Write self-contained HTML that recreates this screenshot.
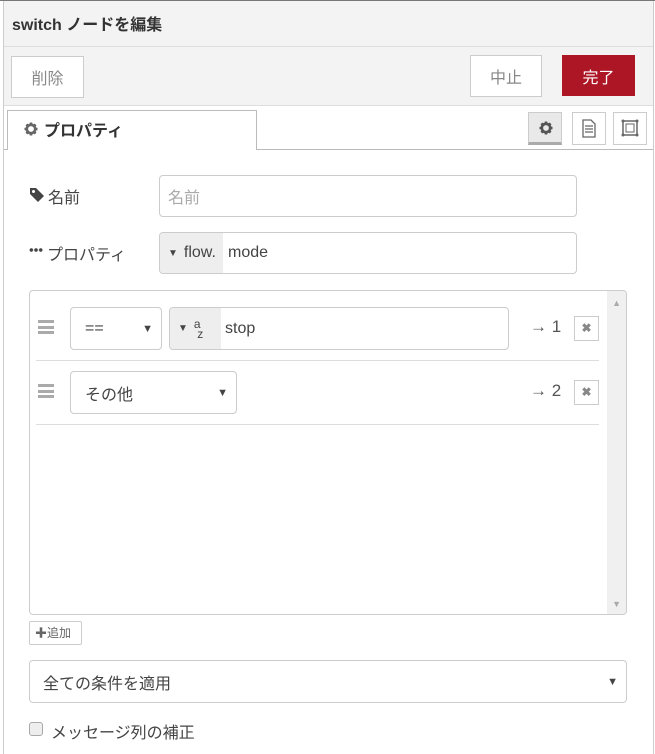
<!DOCTYPE html><html><head><meta charset="utf-8"><style>
*{box-sizing:border-box;margin:0;padding:0}
body{width:655px;height:754px;overflow:hidden;background:#fff;font-family:"Liberation Sans","Noto Sans CJK JP",sans-serif;color:#555;position:relative}
.a{position:absolute}
.btn{position:absolute;background:#fff;border:1px solid #ccc;font-size:16px;color:#888;display:flex;align-items:center;justify-content:center}
.in{position:absolute;border:1px solid #ccc;border-radius:4px;background:#fff;font-size:16px;display:flex;align-items:center}
</style></head><body>
<svg width="0" height="0" style="position:absolute"><defs><g id="gear"><circle cx="7" cy="7" r="4.2" fill="none" stroke="currentColor" stroke-width="2.6"/><path d="M7 0.5v3M7 10.5v3M0.5 7h3M10.5 7h3M2.4 2.4l2.1 2.1M9.5 9.5l2.1 2.1M2.4 11.6l2.1-2.1M9.5 4.5l2.1-2.1" stroke="currentColor" stroke-width="2.6"/></g></defs></svg>
<div class="a" style="left:0;top:0;width:655px;height:1px;background:#777"></div>
<div class="a" style="left:3px;top:1px;width:651px;height:104px;background:#f3f3f3;border-left:1px solid #ccc;border-right:1px solid #ccc"></div>
<div class="a" style="left:3px;top:105px;width:1px;height:649px;background:#ccc"></div>
<div class="a" style="left:653px;top:105px;width:1px;height:649px;background:#ccc"></div>
<div class="a" style="left:12px;top:11px;font-size:16px;font-weight:bold;color:#333">switch ノードを編集</div>
<div class="a" style="left:4px;top:46px;width:649px;height:1px;background:#ddd"></div>
<div class="btn" style="left:11px;top:56px;width:73px;height:42px">削除</div>
<div class="btn" style="left:470px;top:55px;width:72px;height:42px">中止</div>
<div class="btn" style="left:562px;top:55px;width:73px;height:41px;background:#ad1625;border-color:#ad1625;color:#fff">完了</div>
<div class="a" style="left:4px;top:105px;width:649px;height:1px;background:#ddd"></div>
<div class="a" style="left:4px;top:149px;width:649px;height:1px;background:#bbb"></div>
<div class="a" style="left:7px;top:110px;width:250px;height:40px;background:#fff;border:1px solid #bbb;border-bottom:none"></div>
<svg class="a" style="left:24px;top:122px;color:#666" width="14" height="14"><use href="#gear"/></svg>
<div class="a" style="left:44px;top:117px;font-size:16px;font-weight:bold;color:#333">プロパティ</div>
<div class="a" style="left:528px;top:112px;width:34px;height:33px;background:#e9e9e9;border:1px solid #ccc;border-bottom:3px solid #aaa"><svg style="position:absolute;left:10px;top:8px;color:#555" width="14" height="14"><use href="#gear"/></svg></div>
<div class="a" style="left:572px;top:112px;width:34px;height:33px;border:1px solid #ccc;background:#fff"><svg width="32" height="31"><path d="M10 7h8l4 4v13H10z M12 13h8 M12 16h8 M12 19h8" fill="none" stroke="#666" stroke-width="1.3"/></svg></div>
<div class="a" style="left:613px;top:112px;width:34px;height:33px;border:1px solid #ccc;background:#fff"><svg width="32" height="31"><rect x="9" y="8" width="14" height="14" fill="none" stroke="#666" stroke-width="1.5"/><rect x="12" y="11" width="8" height="8" fill="none" stroke="#666"/><circle cx="9" cy="8" r="1.5" fill="#666"/><circle cx="23" cy="8" r="1.5" fill="#666"/><circle cx="9" cy="22" r="1.5" fill="#666"/><circle cx="23" cy="22" r="1.5" fill="#666"/></svg></div>
<svg class="a" style="left:29px;top:187px" width="16" height="16"><path d="M1 1h6l8 8-6 6-8-8z" fill="#444"/><circle cx="4.5" cy="4.5" r="1.5" fill="#fff"/></svg>
<div class="a" style="left:48px;top:184px;font-size:16px;color:#444">名前</div>
<div class="in" style="left:159px;top:175px;width:418px;height:42px;padding-left:8px;color:#aaa">名前</div>
<div class="a" style="left:29px;top:248px;width:14px;height:4px;background:radial-gradient(circle,#444 1.6px,transparent 2px) 0 0/4.7px 4px repeat-x"></div>
<div class="a" style="left:47px;top:241px;font-size:16px;color:#444">プロパティ</div>
<div class="in" style="left:159px;top:232px;width:418px;height:42px;overflow:hidden"><div style="width:63px;height:100%;background:#eee;display:flex;align-items:center;padding-left:8px;color:#444"><span style="font-size:10px;margin-right:6px">▼</span>flow.</div><span style="margin-left:5px;color:#444">mode</span></div>
<div class="a" style="left:29px;top:290px;width:598px;height:325px;border:1px solid #ccc;border-radius:4px;overflow:hidden">
<div class="a" style="right:0;top:0;width:19px;height:100%;background:#f0f0f0"></div>
<div class="a" style="right:5px;top:7px;font-size:9px;color:#aaa">▲</div>
<div class="a" style="right:5px;bottom:5px;font-size:9px;color:#aaa">▼</div>
</div>
<div class="a" style="left:38px;top:320px;width:16px;height:14px;border-top:3px solid #aaa;border-bottom:3px solid #aaa"><div style="margin-top:2.5px;height:3px;background:#aaa"></div></div>
<div class="in" style="left:70px;top:307px;width:92px;height:43px;padding-left:14px;color:#444">==<span style="position:absolute;right:8px;font-size:11px">▼</span></div>
<div class="in" style="left:169px;top:307px;width:340px;height:43px;overflow:hidden"><div style="width:51px;height:100%;background:#eee;display:flex;align-items:center;padding-left:8px;color:#444"><span style="font-size:10px;margin-right:6px">▼</span><span style="font-size:12px;line-height:10px">a<br>&nbsp;z</span></div><span style="margin-left:4px;color:#444">stop</span></div>
<div class="a" style="left:530px;top:317px;font-size:17px;color:#555">→ 1</div>
<div class="a" style="left:574px;top:316px;width:25px;height:25px;border:1px solid #ccc;font-size:12px;font-weight:bold;color:#888;text-align:center;line-height:23px">✖</div>
<div class="a" style="left:36px;top:360px;width:563px;height:1px;background:#ddd"></div>
<div class="a" style="left:38px;top:384px;width:16px;height:14px;border-top:3px solid #aaa;border-bottom:3px solid #aaa"><div style="margin-top:2.5px;height:3px;background:#aaa"></div></div>
<div class="in" style="left:70px;top:371px;width:167px;height:43px;padding-left:14px;color:#444">その他<span style="position:absolute;right:8px;font-size:11px">▼</span></div>
<div class="a" style="left:530px;top:381px;font-size:17px;color:#555">→ 2</div>
<div class="a" style="left:574px;top:380px;width:25px;height:25px;border:1px solid #ccc;font-size:12px;font-weight:bold;color:#888;text-align:center;line-height:23px">✖</div>
<div class="a" style="left:36px;top:424px;width:563px;height:1px;background:#ddd"></div>
<div class="a" style="left:29px;top:621px;width:53px;height:24px;border:1px solid #ccc;border-radius:2px;font-size:12px;color:#666;line-height:22px;padding-left:5px"><b>✚</b>追加</div>
<div class="in" style="left:29px;top:660px;width:598px;height:43px;padding-left:13px;color:#444">全ての条件を適用<span style="position:absolute;right:8px;font-size:11px">▼</span></div>
<div class="a" style="left:29px;top:722px;width:14px;height:14px;border:1px solid #aaa;border-radius:3px;background:#eee"></div>
<div class="a" style="left:51px;top:719px;font-size:16px;color:#444">メッセージ列の補正</div>
</body></html>
